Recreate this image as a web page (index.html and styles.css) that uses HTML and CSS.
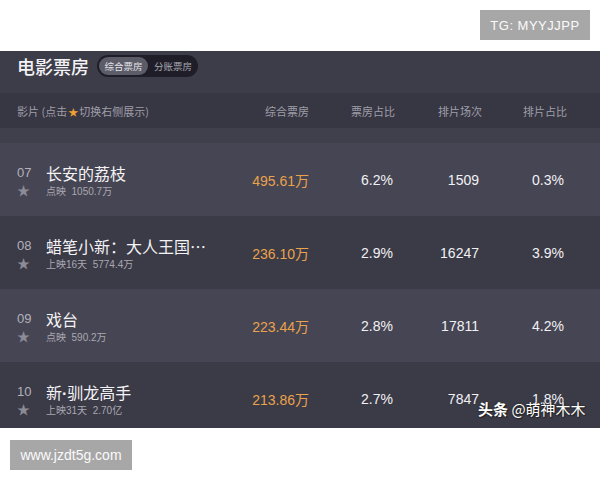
FILE: index.html
```html
<!DOCTYPE html>
<html lang="zh">
<head>
<meta charset="utf-8">
<link rel="stylesheet" href="styles.css">
</head>
<body>
<div class="page">
  <div class="top">
    <div class="badge tg">TG: MYYJJPP</div>
  </div>
  <div class="panel">
    <div class="titlebar">
      <div class="title">电影票房</div>
      <div class="pill">
        <span class="seg active">综合票房</span>
        <span class="seg">分账票房</span>
      </div>
    </div>
    <div class="thead">
      <div class="th name">影片 (点击<span class="hstar">★</span>切换右侧展示)</div>
      <div class="th">综合票房</div>
      <div class="th">票房占比</div>
      <div class="th">排片场次</div>
      <div class="th">排片占比</div>
    </div>
    <div class="strip"></div>
    <div class="rows">
      <div class="row odd">
        <div class="film">
          <span class="rank">07</span><span class="fname">长安的荔枝</span>
          <span class="star">★</span><span class="sub">点映&nbsp; 1050.7万</span>
        </div>
        <div class="cell rev">495.61万</div>
        <div class="cell pct">6.2%</div>
        <div class="cell num">1509</div>
        <div class="cell pct2">0.3%</div>
      </div>
      <div class="row even">
        <div class="film">
          <span class="rank">08</span><span class="fname">蜡笔小新：大人王国…</span>
          <span class="star">★</span><span class="sub">上映16天&nbsp; 5774.4万</span>
        </div>
        <div class="cell rev">236.10万</div>
        <div class="cell pct">2.9%</div>
        <div class="cell num">16247</div>
        <div class="cell pct2">3.9%</div>
      </div>
      <div class="row odd">
        <div class="film">
          <span class="rank">09</span><span class="fname">戏台</span>
          <span class="star">★</span><span class="sub">点映&nbsp; 590.2万</span>
        </div>
        <div class="cell rev">223.44万</div>
        <div class="cell pct">2.8%</div>
        <div class="cell num">17811</div>
        <div class="cell pct2">4.2%</div>
      </div>
      <div class="row even">
        <div class="film">
          <span class="rank">10</span><span class="fname">新<span class="dot">·</span>驯龙高手</span>
          <span class="star">★</span><span class="sub">上映31天&nbsp; 2.70亿</span>
        </div>
        <div class="cell rev">213.86万</div>
        <div class="cell pct">2.7%</div>
        <div class="cell num">7847</div>
        <div class="cell pct2">1.8%</div>
      </div>
    </div>
    <div class="watermark"><b>头条</b> @萌神木木</div>
  </div>
  <div class="bottom">
    <div class="badge site">www.jzdt5g.com</div>
  </div>
</div>
</body>
</html>
```

FILE: styles.css
```css
* { box-sizing: border-box; }
html, body { margin: 0; padding: 0; background: #ffffff; }
body {
  width: 600px;
  height: 480px;
  overflow: hidden;
  font-family: "Liberation Sans", "Noto Sans CJK SC", sans-serif;
}
.page { display: flex; flex-direction: column; }

.top {
  height: 51px;
  display: flex;
  justify-content: flex-end;
  padding: 10px 10px 0 0;
}
.badge {
  background: #a7a7a7;
  color: #fafafa;
  display: flex;
  align-items: center;
  justify-content: center;
  height: 30px;
}
.tg {
  width: 110px;
  font-size: 13px;
  letter-spacing: 0.5px;
}

.panel {
  position: relative;
  height: 377px;
  overflow: hidden;
  background: #3c3b48;
  display: flex;
  flex-direction: column;
}
.titlebar {
  height: 42px;
  flex: none;
  display: flex;
  align-items: flex-start;
  padding: 4px 0 0 17px;
  gap: 8px;
  background: #3d3c49;
}
.title {
  font-family: "Noto Sans CJK SC", sans-serif;
  font-size: 18px;
  font-weight: 500;
  line-height: 22px;
  color: #f2f2f4;
}
.pill {
  height: 22px;
  width: 101px;
  border-radius: 11px;
  background: #1f1e28;
  display: flex;
  align-items: center;
  padding: 0 2px;
  font-family: "Noto Sans CJK SC", sans-serif;
  font-size: 9.5px;
  color: #a9a8b2;
  white-space: nowrap;
}
.seg {
  height: 18px;
  display: flex;
  align-items: center;
  justify-content: center;
  border-radius: 9px;
  flex: none;
}
.seg.active {
  width: 49px;
  background: #5c5b68;
  color: #e4e4e8;
}
.seg + .seg { padding-left: 6px; }

.thead, .row {
  display: grid;
  grid-template-columns: 223px 69px 86px 87px 85px;
  padding-left: 17px;
  align-items: center;
}
.thead {
  height: 35px;
  flex: none;
  background: #373643;
  font-family: "Noto Sans CJK SC", sans-serif;
  font-size: 11px;
  color: #9f9ea8;
}
.th { text-align: right; }
.th.name { text-align: left; }
.hstar { color: #f0a030; font-size: 10px; margin: 0 1px; }
.strip {
  height: 15px;
  flex: none;
  background: #403f4c;
}
.rows { display: flex; flex-direction: column; }
.row {
  height: 73px;
  flex: none;
}
.row.odd { background: #464553; }
.row.even { background: #3b3a47; }

.film {
  display: grid;
  grid-template-columns: 29px 1fr;
  grid-template-rows: 22px 14px;
  align-items: center;
}
.rank {
  font-size: 13px;
  color: #b3b2bb;
}
.fname {
  font-family: "Noto Sans CJK SC", sans-serif;
  font-size: 16px;
  color: #f3f3f5;
  white-space: nowrap;
}
.dot { font-family: "Liberation Sans", sans-serif; font-weight: 700; }
.star {
  font-size: 13px;
  line-height: 14px;
  color: #8c8b96;
}
.sub {
  font-family: "Liberation Sans", "Noto Sans CJK SC", sans-serif;
  font-size: 10px;
  color: #a9a8b1;
}
.cell {
  text-align: right;
  font-size: 14px;
  color: #f1f1f3;
}
.rev { color: #eaa24c; }
.pct { padding-right: 2px; }
.num { padding-right: 3px; }
.pct2 { padding-right: 3px; }

.watermark {
  position: absolute;
  left: 478px;
  top: 347px;
  font-family: "Noto Sans CJK SC", sans-serif;
  font-size: 15px;
  color: #ffffff;
  text-shadow: 0 0 2px #222, 1px 1px 1px #222;
  white-space: nowrap;
}
.watermark b { font-weight: 700; }

.bottom {
  padding: 12px 0 0 10px;
  display: flex;
}
.site {
  width: 122px;
  font-size: 14px;
}
```
